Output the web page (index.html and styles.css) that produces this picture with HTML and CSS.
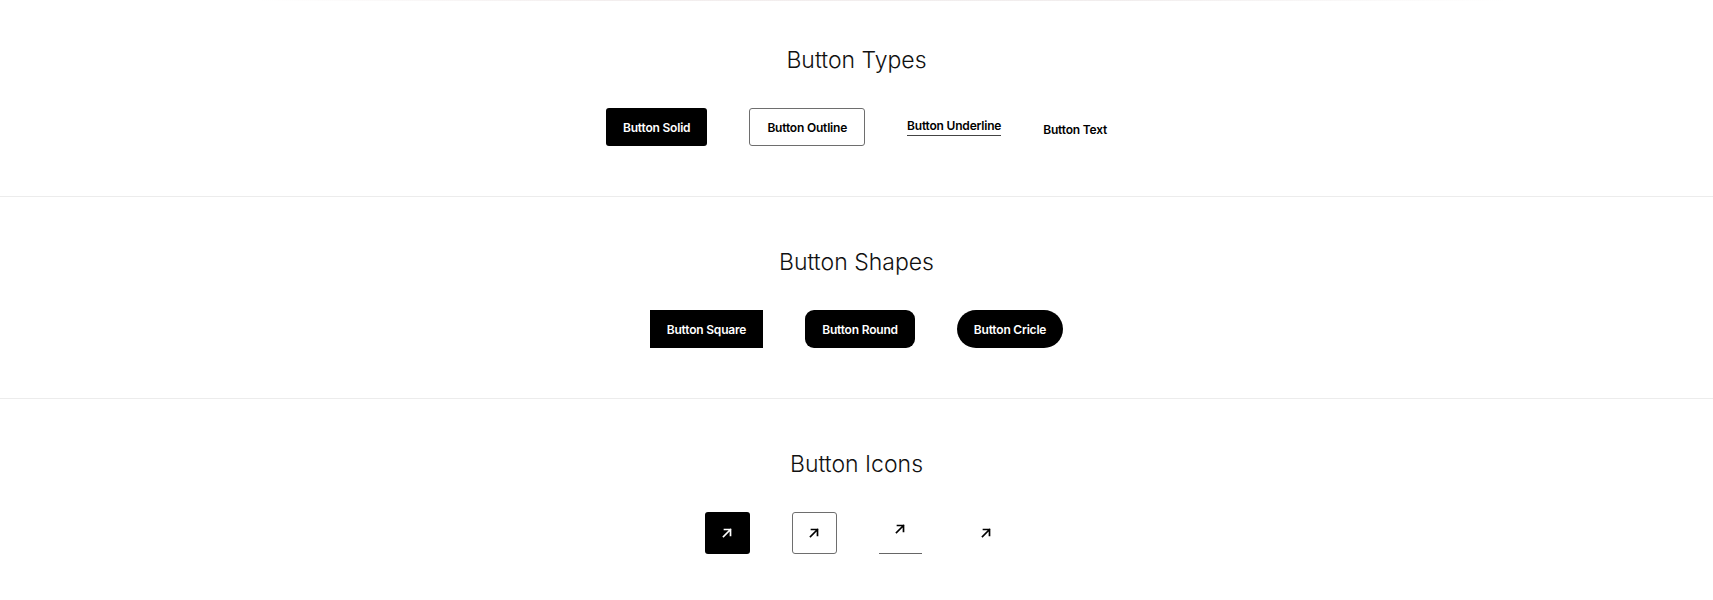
FILE: index.html
```html
<!DOCTYPE html>
<html lang="en">
<head>
<meta charset="utf-8">
<title>Buttons</title>
<link rel="stylesheet" href="styles.css">
</head>
<body>
<div class="topline"></div>
<main class="page">
  <section class="section section--first">
    <h2 class="section__title">Button Types</h2>
    <div class="row">
      <a class="btn btn--solid">Button Solid</a>
      <a class="btn btn--outline">Button Outline</a>
      <a class="btn btn--underline">Button Underline</a>
      <a class="btn btn--text">Button Text</a>
    </div>
  </section>
  <section class="section">
    <h2 class="section__title">Button Shapes</h2>
    <div class="row">
      <a class="btn btn--solid btn--square">Button Square</a>
      <a class="btn btn--solid btn--round">Button Round</a>
      <a class="btn btn--solid btn--circle">Button Cricle</a>
    </div>
  </section>
  <section class="section">
    <h2 class="section__title">Button Icons</h2>
    <div class="row row--icons">
      <a class="ibtn ibtn--solid"><svg class="arrow" viewBox="0 0 12 12"><path d="M2.5 9.5 L9.5 2.5 M3.5 2.5 H9.5 V8.5"/></svg></a>
      <a class="ibtn ibtn--outline"><svg class="arrow" viewBox="0 0 12 12"><path d="M2.5 9.5 L9.5 2.5 M3.5 2.5 H9.5 V8.5"/></svg></a>
      <a class="ibtn ibtn--underline"><svg class="arrow" viewBox="0 0 12 12"><path d="M2.5 9.5 L9.5 2.5 M3.5 2.5 H9.5 V8.5"/></svg></a>
      <a class="ibtn ibtn--text"><svg class="arrow" viewBox="0 0 12 12"><path d="M2.5 9.5 L9.5 2.5 M3.5 2.5 H9.5 V8.5"/></svg></a>
    </div>
  </section>
</main>
</body>
</html>
```
FILE: styles.css
```css
html, body {
  margin: 0;
  padding: 0;
  background: #fff;
}
body {
  font-family: Inter, "Liberation Sans", sans-serif;
  color: #000;
}
.topline {
  height: 1px;
  background: linear-gradient(90deg, rgba(240,236,236,0) 15%, #f3eeee 35%, #f1eded 65%, rgba(240,236,236,0) 88%);
}
.section {
  padding: 50px 0 50px;
  border-bottom: 1px solid #ececec;
  display: flex;
  flex-direction: column;
  align-items: center;
}
.section--first {
  padding-top: 44px;
}
.section__title {
  margin: 0 0 33px;
  height: 30px;
  font-size: 23px;
  line-height: 30px;
  font-weight: 300;
  color: #111;
  letter-spacing: 0;
}
.row {
  display: flex;
  align-items: center;
  justify-content: center;
  gap: 42px;
  height: 38px;
}
.row--icons {
  height: 42px;
}
.btn {
  display: inline-flex;
  align-items: center;
  justify-content: center;
  box-sizing: border-box;
  height: 38px;
  padding: 2px 17px 0;
  font-size: 12px;
  line-height: 14px;
  font-weight: 600;
  letter-spacing: -0.2px;
  color: #000;
  text-decoration: none;
  white-space: nowrap;
}
.btn--solid {
  background: #000;
  color: #fff;
  border-radius: 3px;
}
.btn--outline {
  border: 1px solid #6e6e6e;
  border-radius: 3px;
}
.btn--underline {
  height: auto;
  padding: 0 0 2px;
  border-bottom: 1px solid #444;
  margin-top: 1px;
}
.btn--text {
  height: auto;
  padding: 0;
  margin-top: 6px;
}
.btn--square {
  border-radius: 0;
}
.btn--round {
  border-radius: 9px;
}
.btn--circle {
  border-radius: 999px;
}
.ibtn {
  display: inline-flex;
  align-items: center;
  justify-content: center;
  box-sizing: border-box;
  width: 45px;
  height: 42px;
  color: #000;
}
.ibtn--solid {
  background: #000;
  color: #fff;
  border-radius: 3px;
}
.ibtn--outline {
  border: 1px solid #6e6e6e;
  border-radius: 3px;
}
.ibtn--underline {
  border-bottom: 1px solid #666;
  width: 43px;
  padding-bottom: 7px;
}
.arrow {
  width: 12px;
  height: 12px;
  fill: none;
  stroke: currentColor;
  stroke-width: 1.7;
  stroke-linecap: square;
}
```
